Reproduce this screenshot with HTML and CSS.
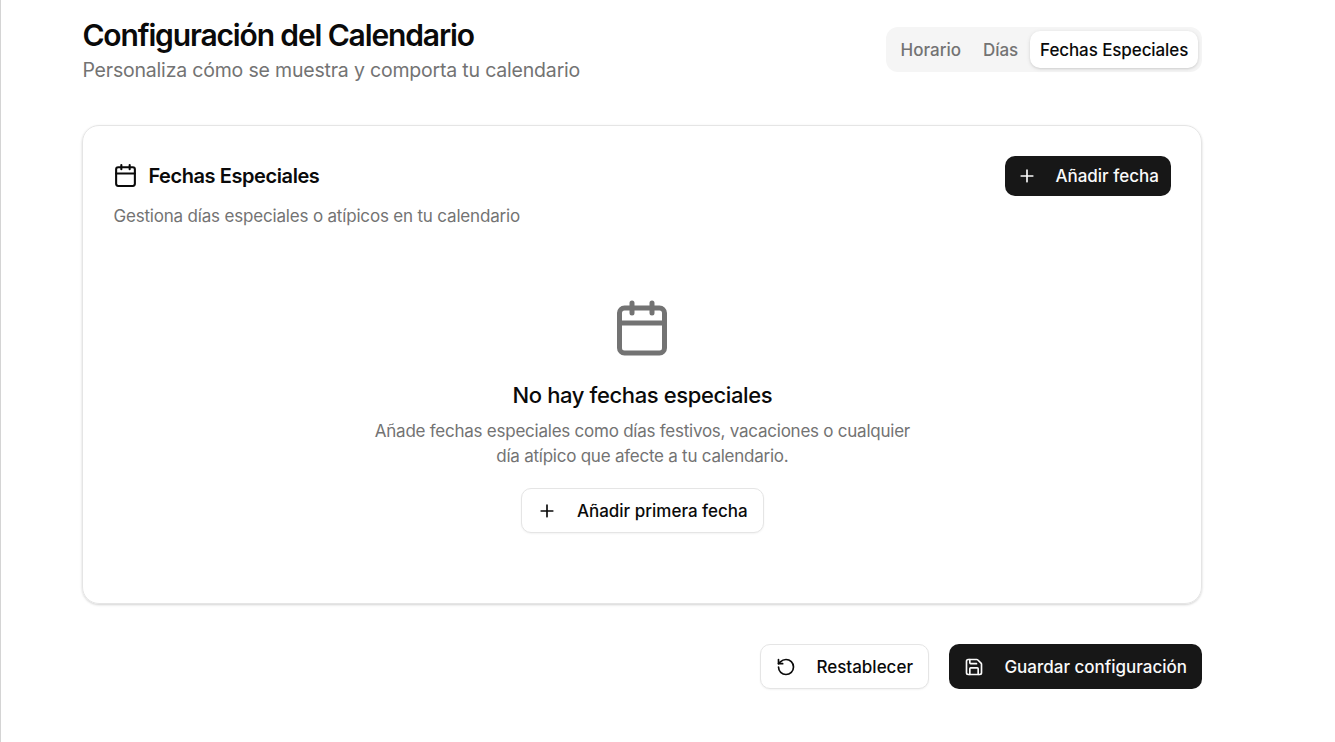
FILE: index.html
```html
<!DOCTYPE html>
<html lang="es">
<head>
<meta charset="utf-8">
<title>Configuración del Calendario</title>
<link rel="stylesheet" href="styles.css">
</head>
<body>
<main class="page">
  <header class="header">
    <div>
      <h1 class="title"><span>Configuración del Calendario</span></h1>
      <p class="subtitle"><span>Personaliza cómo se muestra y comporta tu calendario</span></p>
    </div>
    <nav class="tabs">
      <button class="tab tab-hours"><span>Horario</span></button>
      <button class="tab tab-days"><span>Días</span></button>
      <button class="tab tab-active"><span>Fechas Especiales</span></button>
    </nav>
  </header>

  <section class="card">
    <div class="card-header">
      <div>
        <h2 class="card-title">
          <svg class="icon icon-title" viewBox="0 0 24 24"><path d="M8 2v4M16 2v4M3 10h18"/><rect x="3" y="4" width="18" height="18" rx="2"/></svg>
          <span>Fechas Especiales</span>
        </h2>
        <p class="card-description"><span>Gestiona días especiales o atípicos en tu calendario</span></p>
      </div>
      <button class="button button-dark button-add">
        <svg class="icon" viewBox="0 0 24 24"><path d="M5 12h14M12 5v14"/></svg>
        <span>Añadir fecha</span>
      </button>
    </div>
    <div class="empty">
      <svg class="icon icon-large" viewBox="0 0 24 24"><path d="M8 2v4M16 2v4M3 10h18"/><rect x="3" y="4" width="18" height="18" rx="2"/></svg>
      <h3 class="empty-title"><span>No hay fechas especiales</span></h3>
      <p class="empty-text"><span>Añade fechas especiales como días festivos, vacaciones o cualquier</span><br><span>día atípico que afecte a tu calendario.</span></p>
      <button class="button button-light button-first">
        <svg class="icon" viewBox="0 0 24 24"><path d="M5 12h14M12 5v14"/></svg>
        <span>Añadir primera fecha</span>
      </button>
    </div>
  </section>

  <footer class="actions">
    <button class="button button-light button-reset">
      <svg class="icon" viewBox="0 0 24 24"><path d="M3 12a9 9 0 1 0 9-9 9.75 9.75 0 0 0-6.74 2.74L3 8"/><path d="M3 3v5h5"/></svg>
      <span>Restablecer</span>
    </button>
    <button class="button button-dark button-save">
      <svg class="icon" viewBox="0 0 24 24"><path d="M15.2 3a2 2 0 0 1 1.4.6l3.8 3.8a2 2 0 0 1 .6 1.4V19a2 2 0 0 1-2 2H5a2 2 0 0 1-2-2V5a2 2 0 0 1 2-2z"/><path d="M17 21v-7a1 1 0 0 0-1-1H8a1 1 0 0 0-1 1v7M7 3v4a1 1 0 0 0 1 1h7"/></svg>
      <span>Guardar configuración</span>
    </button>
  </footer>
</main>
</body>
</html>
```

FILE: styles.css
```css
* { box-sizing: border-box; }

body {
  margin: 0;
  height: 742px;
  overflow: hidden;
  border-left: 1px solid #d4d4d4;
  background: #fff;
  color: #0a0a0a;
  font-family: Inter, "Liberation Sans", sans-serif;
}

h1, h2, h3, p { margin: 0; white-space: nowrap; }

button {
  border: 0;
  font: inherit;
  white-space: nowrap;
}

.page {
  width: 1120px;
  margin-left: 81.4px;
  padding-top: 15px;
}

.header {
  display: flex;
  justify-content: space-between;
  height: 110px;
}

.title {
  font-size: 30px;
  line-height: 40px;
  font-weight: 600;
  letter-spacing: -1.14px;
}

.subtitle {
  color: #737373;
  font-size: 19.5px;
  line-height: 31px;
  letter-spacing: -0.19px;
}

.tabs {
  display: flex;
  width: 316px;
  height: 45px;
  margin-top: 12px;
  padding: 4px;
  border-radius: 12px;
  background: #f5f5f5;
}

.tab {
  height: 37px;
  padding: 0;
  border-radius: 10px;
  background: none;
  color: #737373;
  font-size: 17px;
  font-weight: 500;
  letter-spacing: -0.1px;
}

.tab-hours { width: 81px; letter-spacing: 0; }
.tab-days { width: 59px; }
.tab-active {
  width: 169px;
  background: #fff;
  color: #0a0a0a;
  box-shadow: 0 1px 4px rgba(0, 0, 0, .1), 0 1px 2px rgba(0, 0, 0, .08);
}

.card {
  height: 479px;
  padding: 30px;
  border: 1px solid #e5e5e5;
  border-radius: 17px;
  box-shadow: 0 1px 3px rgba(0, 0, 0, .1), 0 1px 2px rgba(0, 0, 0, .08);
}

.card-header {
  display: flex;
  justify-content: space-between;
}

.card-title {
  display: flex;
  align-items: center;
  gap: 10px;
  height: 40px;
  font-size: 20px;
  font-weight: 600;
  letter-spacing: -0.42px;
}

.card-description {
  color: #737373;
  font-size: 17px;
  line-height: 25px;
  margin-top: 8px;
  letter-spacing: -0.18px;
}

.icon {
  flex: none;
  width: 20px;
  height: 20px;
  fill: none;
  stroke: currentColor;
  stroke-width: 2;
  stroke-linecap: round;
  stroke-linejoin: round;
}

.icon-title { width: 25px; height: 25px; margin-bottom: 1px; }
.icon-large { width: 60px; height: 60px; color: #737373; }

.button {
  display: flex;
  align-items: center;
  height: 45px;
  padding: 0 0 0 15px;
  gap: 20px;
  border-radius: 10px;
  font-size: 17px;
  font-weight: 500;
}

.button-dark { background: #171717; color: #fafafa; }
.button-light {
  background: #fff;
  color: #0a0a0a;
  border: 1px solid #e5e5e5;
  box-shadow: 0 1px 2px rgba(0, 0, 0, .05);
}

.button-add { width: 166px; height: 40px; padding-left: 12px; gap: 18px; }
.button-first { width: 243px; margin-top: 19px; }
.button-reset { width: 169px; }
.button-save { width: 253px; }

.empty {
  display: flex;
  flex-direction: column;
  align-items: center;
  padding-top: 69px;
}

.empty-title {
  margin-top: 20px;
  font-size: 22px;
  line-height: 35px;
  font-weight: 500;
  letter-spacing: -0.38px;
}

.empty-text {
  margin-top: 6px;
  color: #737373;
  font-size: 17px;
  line-height: 25px;
  text-align: center;
  letter-spacing: -0.24px;
}

.actions {
  display: flex;
  justify-content: flex-end;
  gap: 20px;
  margin-top: 40px;
}
```
